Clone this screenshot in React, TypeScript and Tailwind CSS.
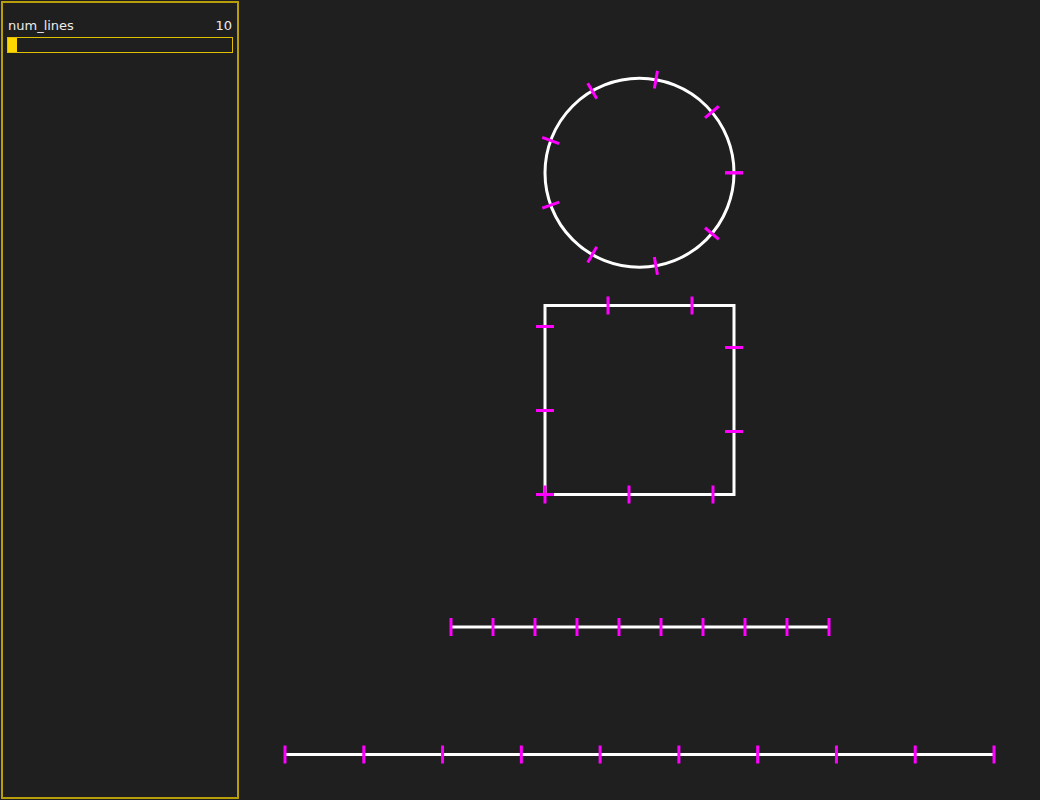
import React from 'react';

const NUM = 10;
const MAGENTA = '#ff00ff';
const TICK = 9; // half length

function circleTicks(cx: number, cy: number, r: number) {
  const out = [];
  for (let i = 0; i < NUM; i++) {
    const a = (i / (NUM - 1)) * Math.PI * 2;
    const x = cx + Math.cos(a) * r;
    const y = cy + Math.sin(a) * r;
    const dx = Math.cos(a) * TICK;
    const dy = Math.sin(a) * TICK;
    out.push(
      <line key={i} x1={x - dx} y1={y - dy} x2={x + dx} y2={y + dy} stroke={MAGENTA} strokeWidth={3} />
    );
  }
  return out;
}

function squareTicks(x0: number, y0: number, size: number) {
  // start bottom-left, go right, up, left, down
  const per = size * 4;
  const out = [];
  for (let i = 0; i < NUM; i++) {
    const d = (i / (NUM - 1)) * per;
    let x = 0, y = 0, horiz = false;
    if (d < size) { x = x0 + d; y = y0 + size; horiz = false; }
    else if (d < size * 2) { x = x0 + size; y = y0 + size - (d - size); horiz = true; }
    else if (d < size * 3) { x = x0 + size - (d - size * 2); y = y0; horiz = false; }
    else { x = x0; y = y0 + (d - size * 3); horiz = true; }
    out.push(
      horiz
        ? <line key={i} x1={x - TICK} y1={y} x2={x + TICK} y2={y} stroke={MAGENTA} strokeWidth={3} />
        : <line key={i} x1={x} y1={y - TICK} x2={x} y2={y + TICK} stroke={MAGENTA} strokeWidth={3} />
    );
  }
  return out;
}

function lineTicks(xa: number, xb: number, y: number) {
  const out = [];
  for (let i = 0; i < NUM; i++) {
    const x = xa + ((xb - xa) * i) / (NUM - 1);
    out.push(<line key={i} x1={x} y1={y - TICK} x2={x} y2={y + TICK} stroke={MAGENTA} strokeWidth={3} />);
  }
  return out;
}

export default function App() {
  return (
    <div className="w-[1040px] h-[800px] bg-[#1f1f1f] flex overflow-hidden" style={{ fontFamily: '"DejaVu Sans", sans-serif' }}>
      <div className="w-[240px] h-[800px] shrink-0 p-[1px]">
        <div className="w-[238px] h-full border-2 border-[#b89e0a] px-[4px] pt-[15px]">
          <div className="flex justify-between items-center h-[16px] text-[13px] text-[#ececec] pl-[1px] pr-[1px]">
            <span>num_lines</span>
            <span>10</span>
          </div>
          <div className="mt-[3px] h-[16px] border-[1.5px] border-[#e0c000] flex">
            <div className="w-[9px] h-full bg-[#ffd700]" />
          </div>
        </div>
      </div>
      <svg width={800} height={800} viewBox="240 0 800 800" className="shrink-0">
        <circle cx={639.5} cy={172.8} r={94.5} fill="none" stroke="#ffffff" strokeWidth={3} />
        {circleTicks(639.5, 172.8, 94.5)}
        <rect x={545} y={305.5} width={189} height={189} fill="none" stroke="#ffffff" strokeWidth={3} />
        {squareTicks(545, 305.5, 189)}
        <line x1={451} y1={627} x2={829} y2={627} stroke="#ffffff" strokeWidth={3} />
        {lineTicks(451, 829, 627)}
        <line x1={285} y1={754.5} x2={994} y2={754.5} stroke="#ffffff" strokeWidth={3} />
        {lineTicks(285, 994, 754.5)}
      </svg>
    </div>
  );
}
